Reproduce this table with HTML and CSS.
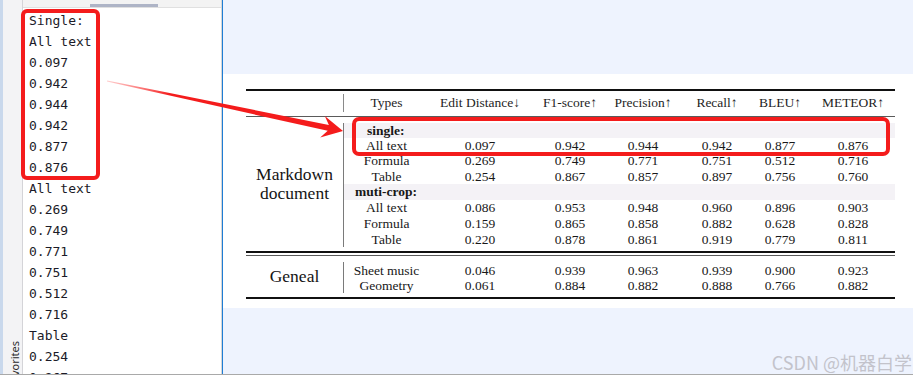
FILE: index.html
```html
<!DOCTYPE html>
<html lang="en">
<head>
<meta charset="utf-8">
<title>Table comparison</title>
<link rel="stylesheet" href="styles.css">
</head>
<body>
<div class="window">
  <aside class="left">
    <div class="strip"><span class="tab">Favorites</span></div>
    <div class="editor">
      <div class="hscroll"><div class="thumb"></div></div>
      <pre class="code">Single:
All text
0.097
0.942
0.944
0.942
0.877
0.876
All text
0.269
0.749
0.771
0.751
0.512
0.716
Table
0.254
0.867</pre>
    </div>
  </aside>
  <main class="right">
    <section class="band">
      <div class="tbl">
        <div class="rule thick"></div>
        <div class="hdr">
          <div class="hbar"></div>
          <div>Types</div>
          <div>Edit Distance↓</div>
          <div>F1-score↑</div>
          <div>Precision↑</div>
          <div>Recall↑</div>
          <div>BLEU↑</div>
          <div class="last">METEOR↑</div>
        </div>
        <div class="rule thin"></div>
        <div class="sec sec1">
          <div class="group g8">Markdown<br>document</div>
          <div class="sub sub-single">single:</div>
          <div>All text</div><div>0.097</div><div>0.942</div><div>0.944</div><div>0.942</div><div>0.877</div><div class="last">0.876</div>
          <div>Formula</div><div>0.269</div><div>0.749</div><div>0.771</div><div>0.751</div><div>0.512</div><div class="last">0.716</div>
          <div>Table</div><div>0.254</div><div>0.867</div><div>0.857</div><div>0.897</div><div>0.756</div><div class="last">0.760</div>
          <div class="sub sub-multi">muti-crop:</div>
          <div>All text</div><div>0.086</div><div>0.953</div><div>0.948</div><div>0.960</div><div>0.896</div><div class="last">0.903</div>
          <div>Formula</div><div>0.159</div><div>0.865</div><div>0.858</div><div>0.882</div><div>0.628</div><div class="last">0.828</div>
          <div>Table</div><div>0.220</div><div>0.878</div><div>0.861</div><div>0.919</div><div>0.779</div><div class="last">0.811</div>
        </div>
        <div class="rule thick"></div>
        <div class="gap"></div>
        <div class="rule thin"></div>
        <div class="sec sec2">
          <div class="group g2">Geneal</div>
          <div>Sheet music</div><div>0.046</div><div>0.939</div><div>0.963</div><div>0.939</div><div>0.900</div><div class="last">0.923</div>
          <div>Geometry</div><div>0.061</div><div>0.884</div><div>0.882</div><div>0.888</div><div>0.766</div><div class="last">0.882</div>
        </div>
        <div class="rule thick"></div>
      </div>
    </section>
    <div class="wm">CSDN @机器白学</div>
  </main>
</div>
<div class="status"></div>
<svg class="annot" width="913" height="376" viewBox="0 0 913 376">
  <defs>
    <linearGradient id="fade" x1="107" y1="0" x2="170" y2="0" gradientUnits="userSpaceOnUse">
      <stop offset="0" stop-color="#ff5a5a" stop-opacity="0.3"/>
      <stop offset="1" stop-color="#f41c1c" stop-opacity="1"/>
    </linearGradient>
  </defs>
  <rect x="23" y="11" width="75" height="167" rx="4" fill="none" stroke="#f41c1c" stroke-width="4"/>
  <rect x="354" y="119" width="534" height="35" rx="5" fill="none" stroke="#f41c1c" stroke-width="4"/>
  <polygon points="107.1,80.4 328.9,125.0 324.8,115.9 343,131 320.2,137.4 327.7,130.8 106.9,81.6" fill="url(#fade)"/>
</svg>
</body>
</html>
```

FILE: styles.css
```css
html, body {
  margin: 0;
  padding: 0;
}
body {
  width: 913px;
  height: 376px;
  overflow: hidden;
  position: relative;
  background: #ffffff;
  display: flex;
  flex-direction: column;
}
.window {
  display: flex;
  height: 374px;
  flex: none;
}
.left {
  display: flex;
  width: 222px;
  flex: none;
}
.strip {
  width: 23px;
  box-sizing: border-box;
  border-left: 3px solid #c9d8ec;
  border-right: 1px solid #d4d4d8;
  background: #f3f3f5;
  display: flex;
  flex-direction: column;
  justify-content: flex-end;
  align-items: center;
  padding-left: 5px;
  overflow: hidden;
}
.tab {
  writing-mode: vertical-rl;
  transform: rotate(180deg);
  font: 11px/12px "Noto Sans", "DejaVu Sans", sans-serif;
  color: #2a2a2a;
  margin-bottom: -14px;
}
.editor {
  width: 199px;
  box-sizing: border-box;
  border-right: 1px solid #d6d6d6;
  display: flex;
  flex-direction: column;
  overflow: hidden;
}
.hscroll {
  height: 7px;
  background: #f3f3f3;
  border-bottom: 1px solid #e0e0e0;
  display: flex;
  align-items: flex-end;
  flex: none;
}
.thumb {
  margin-left: 67px;
  width: 68px;
  height: 3px;
  background: #aeb4c6;
}
.code {
  margin: 0;
  padding: 2px 0 0 6px;
  font: 13px/21px "DejaVu Sans Mono", "Liberation Mono", monospace;
  color: #1b1b28;
}
.right {
  flex: 1;
  border-left: 1px solid #1f7dd4;
  background: #eef3fe;
  display: flex;
  flex-direction: column;
}
.band {
  margin-top: 74px;
  background: #ffffff;
  padding: 15px 0 9px 23px;
}
.tbl {
  width: 649px;
  font: 13.5px/15px "Liberation Serif", "Times New Roman", serif;
  color: #181818;
}
.rule.thick {
  height: 2px;
  background: #111111;
}
.rule.thin {
  height: 1px;
  background: #5a5a5a;
}
.gap {
  height: 2px;
}
.hdr,
.sec {
  display: grid;
  grid-template-columns: 98px 85px 102px 78px 68px 80px 46px 92px;
  align-items: center;
  text-align: center;
}
.hdr {
  height: 25px;
  padding-bottom: 2px;
  box-sizing: border-box;
  color: #1e1e1e;
}
.hbar {
  align-self: stretch;
  background: linear-gradient(#8a8a8a, #8a8a8a) right 60% / 1px 18px no-repeat;
}
.last {
  padding-left: 8px;
}
.sec1 {
  padding: 6px 0 4px;
  grid-template-rows: 15px 15px 15px 16px 16px 15px 16px 16px;
}
.sec2 {
  padding: 6px 0 4px;
  grid-template-rows: 16px 15px;
}
.group {
  grid-column: 1;
  align-self: stretch;
  border-right: 1px solid #7a7a7a;
  display: flex;
  align-items: center;
  justify-content: center;
  font-size: 17.5px;
  line-height: 19px;
  color: #141414;
}
.g8 {
  grid-row: 1 / 9;
  padding-bottom: 3px;
}
.g2 {
  grid-row: 1 / 3;
  padding-bottom: 2px;
}
.sub {
  grid-column: 2 / -1;
  align-self: stretch;
  background: #f4f2f6;
  text-align: left;
  font-weight: bold;
  line-height: 15px;
}
.sub-single {
  padding-left: 23px;
}
.sub-multi {
  padding-left: 11px;
}
.wm {
  margin-top: auto;
  align-self: flex-end;
  padding: 0 1px 2px 0;
  font: 18px/20px "Noto Sans CJK SC", "Noto Sans", sans-serif;
  color: #c3c3cb;
}
.status {
  height: 2px;
  border-top: 1px solid #a9a9a9;
  box-sizing: border-box;
  background: #ffffff;
}
.annot {
  position: absolute;
  left: 0;
  top: 0;
  pointer-events: none;
}
```
